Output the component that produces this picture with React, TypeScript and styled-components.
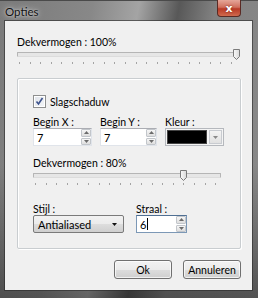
import React from "react";
import styled, { createGlobalStyle } from "styled-components";

const Global = createGlobalStyle`
  html, body { margin: 0; padding: 0; background: #5a5a5a; }
  body { font-family: Lato, "Noto Sans", sans-serif; font-size: 10.5px; color: #000; }
`;

const Window = styled.div`
  width: 258px;
  height: 298px;
  box-sizing: border-box;
  display: flex;
  flex-direction: column;
  background:
    linear-gradient(180deg, rgba(0,0,0,0) 55%, rgba(0,0,0,0.4) 100%),
    linear-gradient(100deg, #7a7a7a 0%, #888 30%, #a4a4a4 45%, #585858 58%, #828282 70%, #8a8a8a 100%);
  border-top: 1px solid #4a4a4a;
  padding: 0 6px 8px 5px;
`;

const TitleBar = styled.div`
  height: 21px;
  display: flex;
  align-items: flex-start;
`;

const Title = styled.span`
  margin-top: 4px;
  font-size: 11.5px;
  color: #111;
  text-shadow: 0 0 6px rgba(255,255,255,0.8), 0 0 2px rgba(255,255,255,0.6);
`;

const CloseButton = styled.div`
  margin-left: auto;
  margin-right: 11px;
  margin-top: -1px;
  width: 24px;
  height: 17px;
  box-sizing: border-box;
  border: 1px solid #5a2a24;
  border-top: none;
  border-radius: 0 0 4px 4px;
  background: linear-gradient(180deg, #e5a699 0%, #d0705e 45%, #b93a26 55%, #cf6a4e 100%);
  display: flex;
  align-items: center;
  justify-content: center;
  color: #fff;
  font-weight: bold;
  font-size: 11px;
  font-family: "DejaVu Sans", sans-serif;
  text-shadow: 0 0 2px #6a1a10;
`;

const Client = styled.div`
  flex: 1;
  background: #f0f0f0;
  box-shadow: 0 0 0 1px rgba(40,40,40,0.6);
  padding: 15px 11px 11px 12px;
  display: flex;
  flex-direction: column;
`;

const Label = styled.div`
  line-height: 12px;
  height: 12px;
  white-space: nowrap;
`;

const SliderWrap = styled.div<{ $w: number }>`
  position: relative;
  width: ${(p) => p.$w}px;
  height: 16px;
  margin-top: 1px;
`;

const Track = styled.div`
  position: absolute;
  left: 0;
  right: 3px;
  top: 3px;
  height: 3px;
  background: #e6e6e6;
  border: 1px solid #b5b5b5;
  border-bottom-color: #dcdcdc;
  border-radius: 1px;
`;

const Ticks = styled.div`
  position: absolute;
  left: 2px;
  right: 0;
  top: 13px;
  height: 2px;
  background: repeating-linear-gradient(to right, #a4a4a4 0 1px, transparent 1px 10.6px);
`;

const ThumbSvg = styled.svg`
  position: absolute;
  top: 0;
`;

function Slider({ w, pct }: { w: number; pct: number }) {
  const left = Math.round(pct * (w - 8) + 1);
  return (
    <SliderWrap $w={w}>
      <Track />
      <Ticks />
      <ThumbSvg width="7" height="11" viewBox="0 0 7 11" style={{ left }}>
        <defs>
          <linearGradient id="tg" x1="0" y1="0" x2="1" y2="0">
            <stop offset="0" stopColor="#fafafa" />
            <stop offset="1" stopColor="#d8d8d8" />
          </linearGradient>
        </defs>
        <path d="M0.5 0.5 H6.5 V7.5 L3.5 10.5 L0.5 7.5 Z" fill="url(#tg)" stroke="#7a7a7a" strokeWidth="1" />
      </ThumbSvg>
    </SliderWrap>
  );
}

const Group = styled.div`
  margin-top: 13px;
  border: 1px solid #c9cdd0;
  box-shadow: inset 1px 1px 0 #fff, 1px 1px 0 #fff;
  border-radius: 2px;
  padding: 16px 0 15px 15px;
  display: flex;
  flex-direction: column;
`;

const CheckRow = styled.div`
  display: flex;
  align-items: center;
  gap: 4px;
  height: 13px;
`;

const CheckBox = styled.div`
  width: 11px;
  height: 11px;
  border: 1px solid #8e8f8f;
  background: linear-gradient(135deg, #dfe3ea 0%, #f4f6f8 100%);
  box-shadow: inset 0 0 0 1px #fff;
  display: flex;
  align-items: center;
  justify-content: center;
`;

const FieldRow = styled.div<{ $gap: number; $mt: number }>`
  display: flex;
  gap: ${(p) => p.$gap}px;
  margin-top: ${(p) => p.$mt}px;
`;

const Field = styled.div<{ $w: number }>`
  width: ${(p) => p.$w}px;
  display: flex;
  flex-direction: column;
`;

const InputBox = styled.div<{ $focus?: boolean }>`
  height: 18px;
  box-sizing: border-box;
  background: #fff;
  border: 1px solid ${(p) => (p.$focus ? "#7c98b6" : "#e0e4ea")};
  border-top-color: ${(p) => (p.$focus ? "#4f6f93" : "#abadb3")};
  display: flex;
  align-items: center;
  padding-left: 3px;
  font-size: 11px;
`;

const Value = styled.span`
  flex: 1;
  display: flex;
  align-items: center;
`;

const Caret = styled.span`
  display: inline-block;
  width: 1px;
  height: 12px;
  background: #000;
  margin-left: 1px;
`;

const Spinner = styled.div`
  width: 10px;
  height: 16px;
  display: flex;
  flex-direction: column;
  gap: 1px;
`;

const SpinBtn = styled.div`
  flex: 1;
  border: 1px solid #c2c6cb;
  border-radius: 1px;
  background: linear-gradient(180deg, #f6f6f6, #dedede);
  display: flex;
  align-items: center;
  justify-content: center;
`;

function Arrow({ up, color = "#6b6b6b" }: { up?: boolean; color?: string }) {
  return (
    <svg width="5" height="3" viewBox="0 0 5 3">
      <path d={up ? "M0 3 L2.5 0 L5 3 Z" : "M0 0 L5 0 L2.5 3 Z"} fill={color} />
    </svg>
  );
}

function SpinInput({ value, focus }: { value: string; focus?: boolean }) {
  return (
    <InputBox $focus={focus}>
      <Value>
        {value}
        {focus && <Caret />}
      </Value>
      <Spinner>
        <SpinBtn>
          <Arrow up />
        </SpinBtn>
        <SpinBtn>
          <Arrow />
        </SpinBtn>
      </Spinner>
    </InputBox>
  );
}

const ColorBox = styled.div`
  height: 18px;
  box-sizing: border-box;
  border: 1px solid #b5b8bd;
  background: #f4f4f4;
  display: flex;
  padding: 1px;
  gap: 2px;
`;

const Swatch = styled.div`
  flex: 1;
  background: #000;
  border: 1px solid #444;
`;

const DropBtn = styled.div`
  width: 11px;
  border: 1px solid #c8cbd0;
  background: linear-gradient(180deg, #f4f4f4, #e1e1e1);
  display: flex;
  align-items: center;
  justify-content: center;
`;

const Combo = styled.div`
  height: 18px;
  box-sizing: border-box;
  border: 1px solid #7a7a7a;
  border-radius: 2px;
  background: linear-gradient(180deg, #f2f2f2 0%, #ebebeb 50%, #dddddd 51%, #cfcfcf 100%);
  display: flex;
  align-items: center;
  padding: 0 6px 0 4px;
  font-size: 11px;
`;

const ComboText = styled.span`
  flex: 1;
`;

const ButtonRow = styled.div`
  margin-top: 11px;
  display: flex;
  justify-content: flex-end;
  gap: 11px;
`;

const Button = styled.div`
  width: 58px;
  height: 19px;
  box-sizing: border-box;
  border: 1px solid #707070;
  border-radius: 3px;
  background: linear-gradient(180deg, #f2f2f2 0%, #ebebeb 50%, #dddddd 51%, #cfcfcf 100%);
  box-shadow: inset 0 0 0 1px rgba(255,255,255,0.7);
  display: flex;
  align-items: center;
  justify-content: center;
  font-size: 10.5px;
`;

export default function App() {
  return (
    <>
      <Global />
      <Window>
        <TitleBar>
          <Title>Opties</Title>
          <CloseButton>x</CloseButton>
        </TitleBar>
        <Client>
          <Label>Dekvermogen : 100%</Label>
          <Slider w={223} pct={1} />
          <Group>
            <CheckRow>
              <CheckBox>
                <svg width="9" height="9" viewBox="0 0 9 9">
                  <path d="M1.5 4.5 L3.5 7 L7.5 1" fill="none" stroke="#3c528c" strokeWidth="1.6" />
                </svg>
              </CheckBox>
              <span>Slagschaduw</span>
            </CheckRow>
            <FieldRow $gap={8} $mt={8}>
              <Field $w={59}>
                <Label>Begin X :</Label>
                <SpinInput value="7" />
              </Field>
              <Field $w={57}>
                <Label>Begin Y :</Label>
                <SpinInput value="7" />
              </Field>
              <Field $w={59}>
                <Label>Kleur :</Label>
                <ColorBox>
                  <Swatch />
                  <DropBtn>
                    <Arrow color="#8a8a8a" />
                  </DropBtn>
                </ColorBox>
              </Field>
            </FieldRow>
            <FieldRow $gap={0} $mt={11}>
              <Field $w={191}>
                <Label>Dekvermogen : 80%</Label>
                <Slider w={191} pct={0.8} />
              </Field>
            </FieldRow>
            <FieldRow $gap={12} $mt={17}>
              <Field $w={91}>
                <Label>Stijl :</Label>
                <Combo>
                  <ComboText>Antialiased</ComboText>
                  <Arrow color="#111" />
                </Combo>
              </Field>
              <Field $w={51}>
                <Label>Straal :</Label>
                <SpinInput value="6" focus />
              </Field>
            </FieldRow>
          </Group>
          <ButtonRow>
            <Button>Ok</Button>
            <Button>Annuleren</Button>
          </ButtonRow>
        </Client>
      </Window>
    </>
  );
}
